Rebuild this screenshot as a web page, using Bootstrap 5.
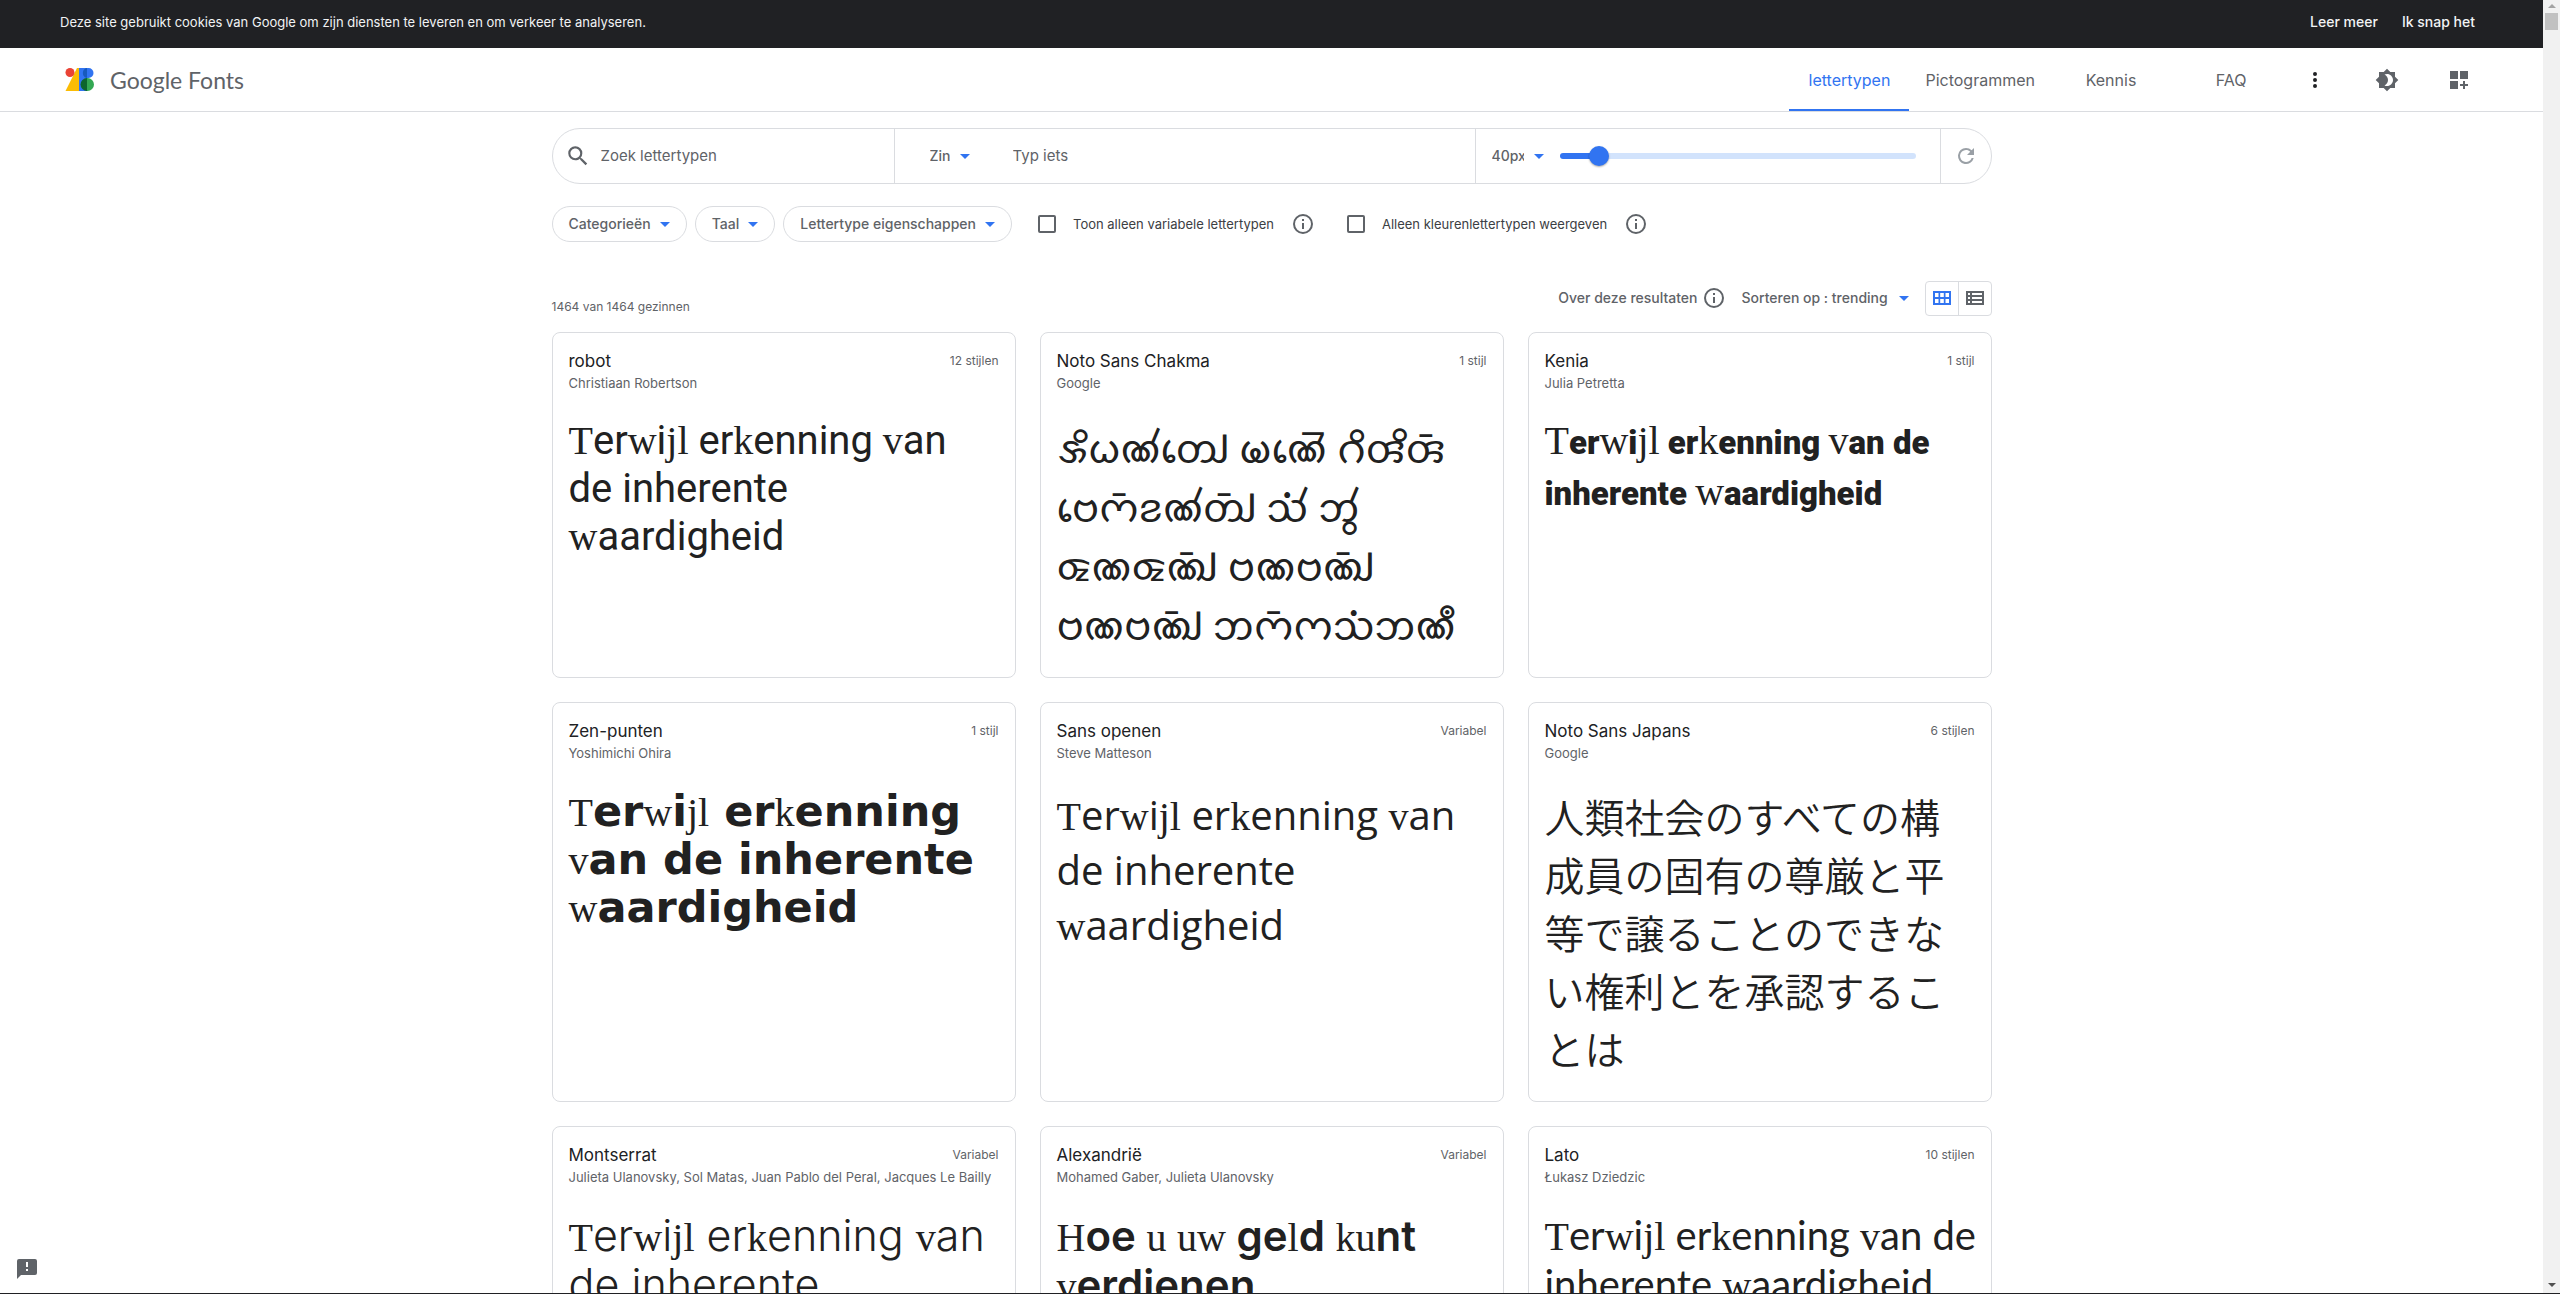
<!DOCTYPE html>
<html lang="nl">
<head>
<meta charset="utf-8">
<meta name="viewport" content="width=device-width, initial-scale=1">
<title>Google Fonts</title>
<link href="https://cdn.jsdelivr.net/npm/bootstrap@5.3.0/dist/css/bootstrap.min.css" rel="stylesheet">
<style>
  :root { --grey: #5f6368; --ink: #202124; --line: #dadce0; --accent: #3174f1; }
  body { font-family: Inter, Roboto, sans-serif; font-size: 14px; line-height: 20px; color: var(--grey); border-bottom: 1px solid #202124; }
  a { text-decoration: none; }
  svg { display: block; fill: currentColor; flex: none; }
  button, select, input[type="text"], input[type="search"] { border: 0; background: none; padding: 0; color: inherit; font: inherit; outline: 0; }
  input::placeholder { color: var(--grey); opacity: 1; }

  .cookie-bar { height: 48px; padding: 0 68px 4px 60px; background: #202124; color: #f1f3f4; gap: 24px; font-size: 13px; }
  .cookie-bar button { font-size: 14px; font-weight: 500; }
  .site-head { height: 64px; padding: 0 60px; border-bottom: 1px solid var(--line); }
  .brand { gap: 10px; color: var(--grey); }
  .brand span { font-family: Lato, sans-serif; font-size: 23px; }
  .brand svg { margin-left: -2px; }
  .tabs a { min-width: 120px; padding: 0 16px; color: var(--grey); font-size: 16px; }
  .tabs a.on { color: var(--accent); box-shadow: inset 0 -2px var(--accent); }
  .icon-row { gap: 24px; }
  .icon-row button { width: 48px; display: flex; justify-content: center; }

  .wrap { width: 100%; max-width: 1440px; margin: 0 auto; }
  .search-pill { height: 56px; margin-top: 16px; border: 1px solid var(--line); border-radius: 28px; font-size: 15px; }
  .search-pill > div + div { border-left: 1px solid var(--line); }
  .search-find { flex: 0 0 341px; padding: 0 12px; gap: 10px; }
  .search-type { padding-left: 35px; gap: 43px; }
  .search-size { flex: 0 0 465px; padding: 0 24px 0 16px; gap: 16px; }
  .search-reset { flex: 0 0 51px; color: #9aa0a6; }
  .pick { appearance: none; font-size: 14px; font-weight: 500; padding-right: 20px;
    background: url("data:image/svg+xml,%3Csvg xmlns='http://www.w3.org/2000/svg' viewBox='0 0 10 5'%3E%3Cpath fill='%233174f1' d='M0 0h10L5 5z'/%3E%3C/svg%3E") no-repeat right center / 10px 5px; }
  .pick-kind { width: 40px; }
  .pick-size { width: 52px; }
  .pick-sort { width: 167px; }
  .size-range { appearance: none; flex: 1; min-width: 0; height: 20px; background: none; }
  .size-range::-webkit-slider-runnable-track { height: 6px; border-radius: 3px; background: linear-gradient(90deg, var(--accent) 11%, #d2e3fc 11%); }
  .size-range::-webkit-slider-thumb { appearance: none; width: 20px; height: 20px; margin-top: -7px; border-radius: 50%; background: var(--accent); box-shadow: 0 1px 2px #0005; }

  .filters { margin-top: 22px; gap: 8px; }
  .chip { display: flex; align-items: center; gap: 9px; height: 36px; padding: 0 16px !important; border: 1px solid var(--line) !important; border-radius: 18px; font-weight: 500 !important; }
  .chip svg { color: var(--accent); }
  .tick { gap: 17px; margin-left: 18px; color: #3c4043; font-size: 13px; }
  .tick + .tick { margin-left: 24px; }
  .tick input { appearance: none; width: 18px; height: 18px; margin: 0; border: 2px solid var(--grey); border-radius: 2px; }
  .tick input:checked { background: var(--accent); }
  .tick button { color: var(--grey); }

  .result-bar { margin-top: 37px; padding-bottom: 15px; }
  .result-count { font-size: 12px; padding-top: 18px; }
  .result-tools { gap: 16px; }
  .view-switch { width: 67px; height: 35px; border: 1px solid var(--line); border-radius: 4px; }
  .view-switch button { flex: 1; display: flex; align-items: center; justify-content: center; }
  .view-switch button + button { border-left: 1px solid var(--line); }

  .font-grid { display: grid; grid-template-columns: repeat(3, minmax(0, 1fr)); gap: 24px; }
  .font-tile { display: block; border: 1px solid var(--line); border-radius: 8px; padding: 16px 16px 24px; color: var(--grey); }
  .font-tile h2 { margin: 0; font-size: 17px; line-height: 24px; font-weight: 400; color: var(--ink); }
  .tile-styles { font-size: 12px; line-height: 24px; }
  .font-tile .tile-by { margin: 0; font-size: 13px; }
  .font-tile .sample { margin: 24px 0 0; font-size: 40px; line-height: 48px; color: #212121; }
  .sample b { font-family: "Liberation Serif", serif; font-weight: 400; font-size: 40px; line-height: 1; }
  .s-roboto { font-family: Roboto, sans-serif; }
  .font-tile .s-chakma { font-family: "Noto Sans Chakma", "Noto Sans", sans-serif; line-height: 59px; }
  .font-tile .s-kenia { font-family: Roboto, sans-serif; font-weight: 900; font-size: 33px; line-height: 51px; }
  .font-tile .s-zen { font-family: "DejaVu Sans", sans-serif; font-weight: 700; font-size: 43px; }
  .font-tile .s-open { font-family: "Open Sans", sans-serif; line-height: 55px; }
  .font-tile .s-jp { font-family: "Noto Sans CJK JP", sans-serif; font-weight: 350; line-height: 58px; }
  .font-tile .s-mont { font-family: Inter, sans-serif; font-weight: 300; font-size: 43px; line-height: 49px; }
  .font-tile .s-alex { font-family: Inter, sans-serif; font-weight: 600; font-size: 42px; line-height: 49px; }
  .font-tile .s-lato { font-family: Lato, sans-serif; line-height: 49px; margin-right: -8px; }

  .feedback { position: fixed; left: 15px; bottom: 13px; color: var(--grey); }
  .scroll-rail { flex: 0 0 17px; background: #f1f1f1; color: #a3a3a3; padding: 4px 0 6px; }
  .scroll-thumb { width: 13px; height: 17px; margin-top: 5px; background: #c1c1c1; }
</style>
</head>
<body class="vh-100 d-flex overflow-hidden bg-white">
<div class="flex-fill overflow-hidden">
  <div class="cookie-bar d-flex align-items-center">
    <span class="me-auto">Deze site gebruikt cookies van Google om zijn diensten te leveren en om verkeer te analyseren.</span>
    <button type="button">Leer meer</button>
    <button type="button">Ik snap het</button>
  </div>

  <header class="site-head d-flex align-items-stretch">
    <a class="brand d-flex align-items-center me-auto" href="#">
      <svg width="42" height="36" viewBox="0 0 42 36">
        <path fill="#fbbc04" d="M22 6v23H7.500L19 6z"/>
        <circle cx="12" cy="10.500" r="4.500" fill="#ea4335"/>
        <path fill="#3174f1" d="M21 6h9.500a5 5 0 0 1 0 10H29v13h-8z"/>
        <path fill="#34a853" d="M29.500 16a6.500 6.500 0 0 1 0 13H29V16z"/>
        <path fill="#185abc" d="M29 6a5.100 5.100 0 0 0 0 10z"/>
        <path fill="#0d652d" d="M29 16a6.500 6.500 0 0 0 0 13z"/>
      </svg>
      <span>Google Fonts</span>
    </a>
    <nav class="tabs d-flex">
      <a class="on d-flex align-items-center justify-content-center" href="#">lettertypen</a>
      <a class="d-flex align-items-center justify-content-center" href="#">Pictogrammen</a>
      <a class="d-flex align-items-center justify-content-center" href="#">Kennis</a>
      <a class="d-flex align-items-center justify-content-center" href="#">FAQ</a>
    </nav>
    <div class="icon-row d-flex align-items-center">
      <button type="button" aria-label="Meer"><svg width="24" height="24" viewBox="0 0 24 24"><path fill="#202124" d="M12 8a2 2 0 1 0 0-4 2 2 0 0 0 0 4zm0 2a2 2 0 1 0 0 4 2 2 0 0 0 0-4zm0 6a2 2 0 1 0 0 4 2 2 0 0 0 0-4z"/></svg></button>
      <button type="button" aria-label="Thema"><svg width="24" height="24" viewBox="0 0 24 24"><path d="M20 8.690V4h-4.690L12 .690 8.690 4H4v4.690L.690 12 4 15.310V20h4.690L12 23.310 15.310 20H20v-4.690L23.310 12 20 8.690zM12 18c-.890 0-1.740-.2-2.500-.550C11.560 16.500 13 14.420 13 12s-1.440-4.500-3.500-5.450C10.260 6.200 11.110 6 12 6c3.310 0 6 2.690 6 6s-2.690 6-6 6z"/></svg></button>
      <button type="button" aria-label="Selectie bekijken"><svg width="24" height="24" viewBox="0 0 24 24"><path d="M3 3h8v8H3zM13 3h8v8h-8zM3 13h8v8H3zM18 13v3h3v2h-3v3h-2v-3h-3v-2h3v-3z"/></svg></button>
    </div>
  </header>

  <main class="wrap">
    <form class="search-pill d-flex">
      <div class="search-find d-flex align-items-center">
        <svg width="26" height="26" viewBox="0 0 24 24"><path d="M15.500 14h-.790l-.280-.270A6.470 6.470 0 0 0 16 9.500 6.500 6.500 0 1 0 9.500 16c1.610 0 3.090-.590 4.230-1.570l.270.280v.790l5 4.990L20.490 19l-4.990-5zm-6 0C7.010 14 5 11.990 5 9.500S7.010 5 9.500 5 14 7.010 14 9.500 11.990 14 9.500 14z"/></svg>
        <input class="flex-fill" type="search" placeholder="Zoek lettertypen" aria-label="Zoek lettertypen">
      </div>
      <div class="search-type d-flex align-items-center flex-fill">
        <select class="pick pick-kind" aria-label="Soort voorbeeld"><option>Zin</option><option>Alinea</option></select>
        <input class="flex-fill" type="text" placeholder="Typ iets" aria-label="Typ iets">
      </div>
      <div class="search-size d-flex align-items-center">
        <select class="pick pick-size" aria-label="Lettergrootte"><option>40px</option><option>64px</option></select>
        <input class="size-range" type="range" min="8" max="380" value="41" aria-label="Lettergrootte schuifregelaar">
      </div>
      <div class="search-reset d-flex align-items-center justify-content-center">
        <button type="reset" aria-label="Opnieuw instellen"><svg width="24" height="24" viewBox="0 0 24 24"><path d="M17.650 6.350A7.960 7.960 0 0 0 12 4a8 8 0 1 0 7.730 10h-2.080A6 6 0 1 1 12 6c1.660 0 3.140.690 4.220 1.780L13 11h7V4l-2.350 2.350z"/></svg></button>
      </div>
    </form>

    <div class="filters d-flex align-items-center">
      <button class="chip" type="button">Categorieën <svg width="10" height="5" viewBox="0 0 10 5"><path d="M0 0h10L5 5z"/></svg></button>
      <button class="chip" type="button">Taal <svg width="10" height="5" viewBox="0 0 10 5"><path d="M0 0h10L5 5z"/></svg></button>
      <button class="chip" type="button">Lettertype eigenschappen <svg width="10" height="5" viewBox="0 0 10 5"><path d="M0 0h10L5 5z"/></svg></button>
      <div class="tick d-flex align-items-center">
        <input type="checkbox" id="only-variable"><label for="only-variable">Toon alleen variabele lettertypen</label>
        <button type="button" aria-label="Info"><svg width="24" height="24" viewBox="0 0 24 24"><path d="M11 7h2v2h-2zm0 4h2v6h-2zm1-9a10 10 0 1 0 0 20 10 10 0 0 0 0-20zm0 18a8 8 0 1 1 0-16 8 8 0 0 1 0 16z"/></svg></button>
      </div>
      <div class="tick d-flex align-items-center">
        <input type="checkbox" id="only-color"><label for="only-color">Alleen kleurenlettertypen weergeven</label>
        <button type="button" aria-label="Info"><svg width="24" height="24" viewBox="0 0 24 24"><path d="M11 7h2v2h-2zm0 4h2v6h-2zm1-9a10 10 0 1 0 0 20 10 10 0 0 0 0-20zm0 18a8 8 0 1 1 0-16 8 8 0 0 1 0 16z"/></svg></button>
      </div>
    </div>

    <div class="result-bar d-flex align-items-center justify-content-between">
      <span class="result-count">1464 van 1464 gezinnen</span>
      <div class="result-tools d-flex align-items-center">
        <a class="d-flex align-items-center gap-1 text-reset fw-medium" href="#">Over deze resultaten <svg width="24" height="24" viewBox="0 0 24 24"><path d="M11 7h2v2h-2zm0 4h2v6h-2zm1-9a10 10 0 1 0 0 20 10 10 0 0 0 0-20zm0 18a8 8 0 1 1 0-16 8 8 0 0 1 0 16z"/></svg></a>
        <select class="pick pick-sort" aria-label="Sorteren"><option>Sorteren op : trending</option><option>Sorteren op : naam</option></select>
        <div class="view-switch d-flex">
          <button type="button" aria-label="Raster"><svg width="18" height="14" viewBox="0 0 18 14"><path fill="#3174f1" fill-rule="evenodd" d="M0 0h18v14H0zM2 2v4h3.500V2zM7.200 2v4h3.600V2zM12.500 2v4H16V2zM2 8v4h3.500V8zM7.200 8v4h3.600V8zM12.500 8v4H16V8z"/></svg></button>
          <button type="button" aria-label="Lijst"><svg width="18" height="14" viewBox="0 0 18 14"><path fill-rule="evenodd" d="M0 0h18v14H0zM2 2v2h2V2zM6 2v2h10V2zM2 6v2h2V6zM6 6v2h10V6zM2 10v2h2v-2zM6 10v2h10v-2z"/></svg></button>
        </div>
      </div>
    </div>

    <div class="font-grid">
      <a class="font-tile" href="#">
        <div class="d-flex justify-content-between"><h2>robot</h2><span class="tile-styles">12 stijlen</span></div>
        <p class="tile-by">Christiaan Robertson</p>
        <p class="sample s-roboto"><b>T</b>er<b>w</b>i<b>jl</b> er<b>k</b>enning <b>v</b>an de inherente <b>w</b>aardigheid</p>
      </a>
      <a class="font-tile" href="#">
        <div class="d-flex justify-content-between"><h2>Noto Sans Chakma</h2><span class="tile-styles">1 stijl</span></div>
        <p class="tile-by">Google</p>
        <p class="sample s-chakma" lang="ccp">𑄡𑄨𑄠𑄚𑄧𑄖𑄳𑄠𑄬 𑄟𑄚𑄬𑄭 𑄉𑄨𑄢𑄨𑄢𑄴 𑄝𑄬𑄇𑄴𑄅𑄚𑄧𑄖𑄴𑄳𑄠 𑄥𑄧𑄁 𑄃𑄮 𑄑𑄚𑄑𑄚𑄴𑄳𑄠 𑄝𑄚𑄝𑄚𑄴𑄳𑄠 𑄝𑄚𑄝𑄚𑄴𑄳𑄠 𑄃𑄇𑄴𑄇𑄥𑄁𑄃𑄚𑄩</p>
      </a>
      <a class="font-tile" href="#">
        <div class="d-flex justify-content-between"><h2>Kenia</h2><span class="tile-styles">1 stijl</span></div>
        <p class="tile-by">Julia Petretta</p>
        <p class="sample s-kenia"><b>T</b>er<b>w</b>i<b>jl</b> er<b>k</b>enning <b>v</b>an de inherente <b>w</b>aardigheid</p>
      </a>
      <a class="font-tile" href="#">
        <div class="d-flex justify-content-between"><h2>Zen-punten</h2><span class="tile-styles">1 stijl</span></div>
        <p class="tile-by">Yoshimichi Ohira</p>
        <p class="sample s-zen"><b>T</b>er<b>w</b>i<b>jl</b> er<b>k</b>enning <b>v</b>an de inherente <b>w</b>aardigheid</p>
      </a>
      <a class="font-tile" href="#">
        <div class="d-flex justify-content-between"><h2>Sans openen</h2><span class="tile-styles">Variabel</span></div>
        <p class="tile-by">Steve Matteson</p>
        <p class="sample s-open"><b>T</b>er<b>w</b>i<b>jl</b> er<b>k</b>enning <b>v</b>an de inherente <b>w</b>aardigheid</p>
      </a>
      <a class="font-tile" href="#">
        <div class="d-flex justify-content-between"><h2>Noto Sans Japans</h2><span class="tile-styles">6 stijlen</span></div>
        <p class="tile-by">Google</p>
        <p class="sample s-jp" lang="ja">人類社会のすべての構成員の固有の尊厳と平等で譲ることのできない権利とを承認することは</p>
      </a>
      <a class="font-tile" href="#">
        <div class="d-flex justify-content-between"><h2>Montserrat</h2><span class="tile-styles">Variabel</span></div>
        <p class="tile-by">Julieta Ulanovsky, Sol Matas, Juan Pablo del Peral, Jacques Le Bailly</p>
        <p class="sample s-mont"><b>T</b>er<b>w</b>i<b>jl</b> er<b>k</b>enning <b>v</b>an de inherente <b>w</b>aardigheid</p>
      </a>
      <a class="font-tile" href="#">
        <div class="d-flex justify-content-between"><h2>Alexandrië</h2><span class="tile-styles">Variabel</span></div>
        <p class="tile-by">Mohamed Gaber, Julieta Ulanovsky</p>
        <p class="sample s-alex"><b>H</b>oe <b>u</b> <b>uw</b> ge<b>l</b>d <b>ku</b>nt <b>v</b>erdienen</p>
      </a>
      <a class="font-tile" href="#">
        <div class="d-flex justify-content-between"><h2>Lato</h2><span class="tile-styles">10 stijlen</span></div>
        <p class="tile-by">Łukasz Dziedzic</p>
        <p class="sample s-lato"><b>T</b>er<b>w</b>i<b>jl</b> er<b>k</b>enning <b>v</b>an de inherente <b>w</b>aardigheid</p>
      </a>
    </div>
  </main>
</div>

<div class="scroll-rail d-flex flex-column align-items-center" aria-hidden="true">
  <svg width="8" height="4" viewBox="0 0 8 4"><path d="M4 0l4 4H0z"/></svg>
  <div class="scroll-thumb"></div>
  <svg class="mt-auto" width="8" height="4" viewBox="0 0 8 4"><path fill="#505050" d="M0 0h8L4 4z"/></svg>
</div>

<button class="feedback" type="button" aria-label="Feedback sturen"><svg width="24" height="24" viewBox="0 0 24 24"><path d="M20 2H4a2 2 0 0 0-2 2v18l4-4h14a2 2 0 0 0 2-2V4a2 2 0 0 0-2-2zm-7 12h-2v-2h2zm0-4h-2V5h2z"/></svg></button>
<script src="https://cdn.jsdelivr.net/npm/bootstrap@5.3.0/dist/js/bootstrap.bundle.min.js"></script>
</body>
</html>
